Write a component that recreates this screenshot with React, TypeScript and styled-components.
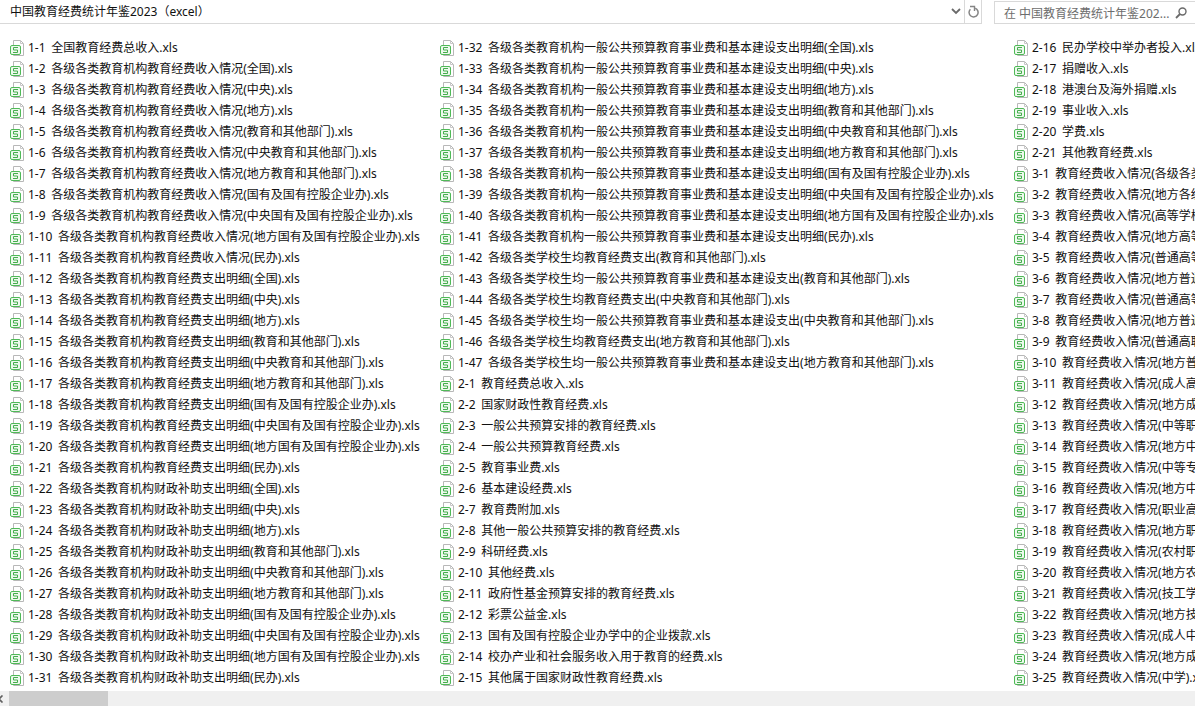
import React from 'react';
import styled, { createGlobalStyle } from 'styled-components';

const GlobalStyle = createGlobalStyle`
  html, body {
    margin: 0;
    padding: 0;
    background: #ffffff;
    overflow: hidden;
  }
`;

const FONT = `"Noto Sans", "Noto Sans CJK SC", sans-serif`;

const Page = styled.div`
  width: 1195px;
  height: 709px;
  display: flex;
  flex-direction: column;
  overflow: hidden;
  font-family: ${FONT};
  font-size: 12px;
  color: #111111;
  background: #ffffff;
`;

const TopBar = styled.div`
  height: 24px;
  flex: none;
  display: flex;
  box-sizing: border-box;
`;

const AddressBar = styled.div`
  width: 982px;
  flex: none;
  display: flex;
  align-items: stretch;
  box-sizing: border-box;
  border-right: 1px solid #d9d9d9;
  border-bottom: 1px solid #d9d9d9;
`;

const AddressText = styled.div`
  flex: 1;
  padding-left: 10px;
  line-height: 23px;
  white-space: nowrap;
`;

const AddressButton = styled.div<{ $width: number; $divider?: boolean }>`
  width: ${p => p.$width}px;
  flex: none;
  display: flex;
  align-items: center;
  justify-content: center;
  box-sizing: border-box;
  border-left: ${p => (p.$divider ? '1px solid #d9d9d9' : 'none')};
`;

const SearchBox = styled.div`
  width: 201px;
  margin-left: 12px;
  margin-top: 1px;
  flex: none;
  display: flex;
  align-items: center;
  justify-content: space-between;
  box-sizing: border-box;
  padding: 0 8px 0 9px;
  border: 1px solid #d9d9d9;
  border-right: none;
  color: #6d6d6d;
  white-space: nowrap;
`;

const FileArea = styled.div`
  flex: 1;
  min-height: 0;
  display: grid;
  grid-template-columns: 430px 574px 1fr;
  padding: 13px 0 0 10px;
  overflow: hidden;
`;

const Column = styled.div`
  display: flex;
  flex-direction: column;
  min-width: 0;
`;

const FileRow = styled.div`
  height: 21px;
  flex: none;
  display: flex;
  align-items: center;
  gap: 3px;
  white-space: nowrap;
`;

const FileName = styled.span`
  line-height: 21px;
  word-spacing: 2.5px;
`;

const ScrollBar = styled.div`
  height: 15px;
  flex: none;
  margin-bottom: 3px;
  display: flex;
  background: #f0f0f0;
  overflow: hidden;
`;

const ScrollArrow = styled.div`
  width: 9px;
  flex: none;
  display: flex;
  align-items: center;
`;

const ScrollThumb = styled.div`
  width: 99px;
  background: #cdcdcd;
`;

const SheetIcon = () => (
  <svg width="15" height="16" viewBox="0 0 15 16" fill="none" style={{ flex: 'none' }}>
    <path d="M3.5 .5H10.5L13.5 3.5V15.5H3.5Z" fill="#fff" stroke="#b8b8b8" />
    <path d="M10.5 .5V3.5H13.5" stroke="#c8c8c8" />
    <rect x=".5" y="5.5" width="10" height="9" rx="1.5" fill="#eef9ee" stroke="#4fb957" />
    <path d="M8 7.5H3.5V10H7.5V12.5H3" stroke="#45ad4d" />
  </svg>
);

const ChevronDown = () => (
  <svg width="10" height="7" viewBox="0 0 10 7" fill="none">
    <path d="M1 1L5 5L9 1" stroke="#6a6a6a" strokeWidth="1.8" />
  </svg>
);

const RefreshIcon = () => (
  <svg width="11" height="13" viewBox="0 0 11 13" fill="none">
    <path d="M7.2 3.2A4.5 4.5 0 1 1 2.4 4.2" stroke="#858585" strokeWidth="1.5" />
    <path d="M2 1.5H6.5V6" stroke="#858585" strokeWidth="1.4" />
  </svg>
);

const SearchIcon = () => (
  <svg width="12" height="12" viewBox="0 0 12 12" fill="none">
    <circle cx="7.5" cy="4.5" r="3.5" stroke="#6a6a6a" strokeWidth="1.4" />
    <path d="M5 7L1 11" stroke="#6a6a6a" strokeWidth="1.8" />
  </svg>
);

const ORG = '各级各类教育机构';
const scopes = [
  '全国', '中央', '地方', '教育和其他部门', '中央教育和其他部门', '地方教育和其他部门',
  '国有及国有控股企业办', '中央国有及国有控股企业办', '地方国有及国有控股企业办', '民办',
];

const column1: string[] = [
  '1-1 全国教育经费总收入',
  ...scopes.map((s, i) => `1-${i + 2} ${ORG}教育经费收入情况(${s})`),
  ...scopes.map((s, i) => `1-${i + 12} ${ORG}教育经费支出明细(${s})`),
  ...scopes.map((s, i) => `1-${i + 22} ${ORG}财政补助支出明细(${s})`),
];

const column2: string[] = [
  ...scopes.map((s, i) => `1-${i + 32} ${ORG}一般公共预算教育事业费和基本建设支出明细(${s})`),
  '1-42 各级各类学校生均教育经费支出(教育和其他部门)',
  '1-43 各级各类学校生均一般公共预算教育事业费和基本建设支出(教育和其他部门)',
  '1-44 各级各类学校生均教育经费支出(中央教育和其他部门)',
  '1-45 各级各类学校生均一般公共预算教育事业费和基本建设支出(中央教育和其他部门)',
  '1-46 各级各类学校生均教育经费支出(地方教育和其他部门)',
  '1-47 各级各类学校生均一般公共预算教育事业费和基本建设支出(地方教育和其他部门)',
  '2-1 教育经费总收入',
  '2-2 国家财政性教育经费',
  '2-3 一般公共预算安排的教育经费',
  '2-4 一般公共预算教育经费',
  '2-5 教育事业费',
  '2-6 基本建设经费',
  '2-7 教育费附加',
  '2-8 其他一般公共预算安排的教育经费',
  '2-9 科研经费',
  '2-10 其他经费',
  '2-11 政府性基金预算安排的教育经费',
  '2-12 彩票公益金',
  '2-13 国有及国有控股企业办学中的企业拨款',
  '2-14 校办产业和社会服务收入用于教育的经费',
  '2-15 其他属于国家财政性教育经费',
];

const column3: string[] = [
  '2-16 民办学校中举办者投入',
  '2-17 捐赠收入',
  '2-18 港澳台及海外捐赠',
  '2-19 事业收入',
  '2-20 学费',
  '2-21 其他教育经费',
  ...['各级各类学校', '地方各级各类学校', '高等学校', '地方高等学校', '普通高等学校', '地方普通高等学校',
    '普通高等学校本科', '地方普通高校本科', '普通高职高专', '地方普通高职高专', '成人高等学校', '地方成人高等学校',
    '中等职业学校', '地方中等职业学校', '中等专业学校', '地方中等专业学校', '职业高中', '地方职业高中',
    '农村职业高中', '地方农村职业高中', '技工学校', '地方技工学校', '成人中专', '地方成人中专', '中学']
    .map((s, i) => `3-${i + 1} 教育经费收入情况(${s})`),
];

const FileColumn: React.FC<{ files: string[] }> = ({ files }) => (
  <Column>
    {files.map(name => (
      <FileRow key={name}>
        <SheetIcon />
        <FileName>{name}.xls</FileName>
      </FileRow>
    ))}
  </Column>
);

export default function App() {
  return (
    <Page>
      <GlobalStyle />
      <TopBar>
        <AddressBar>
          <AddressText>中国教育经费统计年鉴2023（excel）</AddressText>
          <AddressButton $width={17}>
            <ChevronDown />
          </AddressButton>
          <AddressButton $width={17} $divider>
            <RefreshIcon />
          </AddressButton>
        </AddressBar>
        <SearchBox>
          <span>在 中国教育经费统计年鉴202...</span>
          <SearchIcon />
        </SearchBox>
      </TopBar>
      <FileArea>
        <FileColumn files={column1} />
        <FileColumn files={column2} />
        <FileColumn files={column3} />
      </FileArea>
      <ScrollBar>
        <ScrollArrow>
          <svg width="4" height="8" viewBox="0 0 4 8" fill="none">
            <path d="M4 .5L.5 4L4 7.5" stroke="#606060" strokeWidth="1.6" transform="translate(-1.5 0)" />
          </svg>
        </ScrollArrow>
        <ScrollThumb />
      </ScrollBar>
    </Page>
  );
}
